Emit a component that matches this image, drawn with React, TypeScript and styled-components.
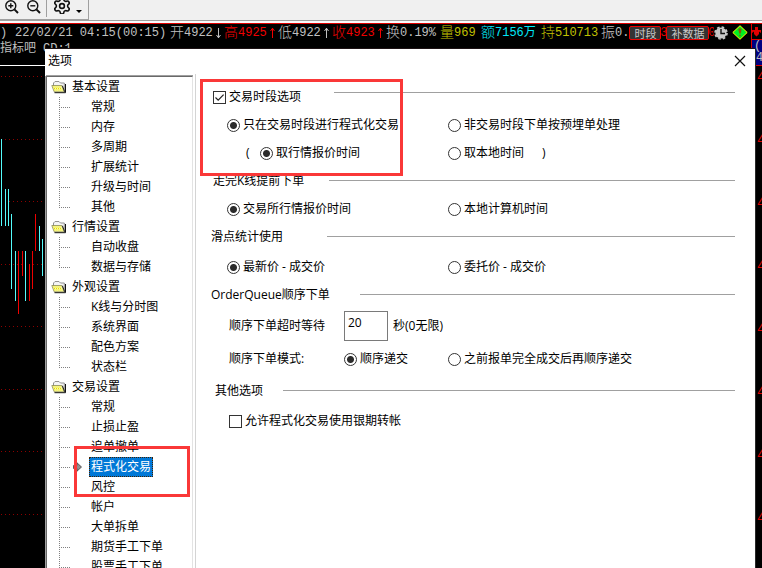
import React from "react";
import styled, { createGlobalStyle } from "styled-components";
import { Settings } from "lucide-react";

const GlobalStyle = createGlobalStyle`
  * { box-sizing: border-box; }
  html, body, #root { height: 100%; }
  body {
    margin: 0;
    overflow: hidden;
    background: #000;
    font: 12px/20px "Open Sans", "Noto Sans CJK SC", sans-serif;
    color: #000;
  }
  ul { list-style: none; margin: 0; padding: 0; }
`;

const Page = styled.div`
  display: flex;
  flex-direction: column;
  height: 100vh;
  overflow: hidden;
`;

/* ---------- toolbar ---------- */

const ToolbarStrip = styled.header`
  flex: none;
  height: 24px;
  background: #fafafa;
  border-bottom: 1px solid #e00000;
`;

const ToolbarFace = styled.div`
  height: 21px;
  background: #f0f0f0;
  border-bottom: 1px solid #a0a0a0;
`;

const ToolGroup = styled.div`
  display: flex;
  width: 89px;
  height: 20px;
  padding-left: 5px;
  border-right: 1px solid #a0a0a0;
  border-bottom: 1px solid #a0a0a0;
`;

const ToolButton = styled.button<{ $wide?: boolean }>`
  display: flex;
  align-items: flex-start;
  gap: 6px;
  width: ${(p) => (p.$wide ? "34px" : "22px")};
  height: 16px;
  padding: 0;
  border: 0;
  background: none;
  color: #111;
`;

const ToolDivider = styled.span`
  width: 1px;
  height: 17px;
  margin: 0 7px 0 -2px;
  background: #a0a0a0;
`;

/* ---------- chart workspace ---------- */

const Workspace = styled.main`
  position: relative;
  display: flex;
  flex: 1;
  min-height: 0;
  overflow: hidden;
  background: #000;
`;

const ChartPane = styled.section`
  display: flex;
  flex-direction: column;
  flex: 1;
  min-width: 0;
  overflow: hidden;
`;

const QuoteBar = styled.div`
  display: grid;
  grid-template-columns: 15px 155px repeat(5, 54px) 41px 60px 60px 1fr;
  align-items: center;
  height: 17px;
  font: 12px/16px "Liberation Mono", "Noto Sans CJK SC", monospace;
  white-space: nowrap;
  overflow: hidden;
`;

const QuoteCell = styled.span<{ $color?: string }>`
  display: flex;
  align-items: center;
  min-width: 0;
  height: 17px;
  color: ${(p) => p.$color ?? "#c0c0c0"};
`;

const QuoteName = styled.span`
  font-size: 14px;
  font-weight: 300;
`;

const ArrowSlot = styled.span`
  display: flex;
  flex: 1;
  justify-content: center;
`;

const Clipped = styled.span`
  display: flex;
  justify-content: center;
  width: 5px;
  overflow: hidden;
  color: #e00000;
`;

const QuoteButton = styled.button`
  flex: none;
  height: 14px;
  padding: 0 4px;
  border: 1px solid #f00000;
  border-radius: 2px;
  background: #333;
  color: #c8c8c8;
  font: 11px/12px "Noto Sans CJK SC", sans-serif;
`;

const Badges = styled.span`
  display: flex;
  gap: 4px;
  align-items: center;
`;

const IndicatorLine = styled.div`
  display: flex;
  gap: 7px;
  height: 25px;
  border-bottom: 1px solid #fff;
  color: #c0c0c0;
  font: 12px/16px "Liberation Mono", "Noto Sans CJK SC", monospace;
`;

const ChartCanvas = styled.div`
  flex: 1;
  min-height: 0;
  overflow: hidden;
`;

const PriceAxis = styled.aside`
  flex: none;
  width: 11px;
  overflow: hidden;
  border-left: 1px solid #e00000;
  font: 14px/12px "Liberation Mono", monospace;
`;

const AxisTop = styled.div`
  display: flex;
  align-items: center;
  height: 16px;
  border-bottom: 1px solid #e00000;
`;

const AxisQuote = styled.div`
  height: 26px;
  padding-left: 2px;
  border-bottom: 1px solid #e00000;
  background: #000080;
  color: #c0c0c0;
  font-size: 12px;
`;

const AxisSecond = styled.div`
  padding-left: 2px;
`;

const AxisMarks = styled.ul`
  display: flex;
  flex-direction: column;
  gap: 51px;
  padding: 5px 0 0 5px;
  color: #e00000;
`;

/* ---------- settings window ---------- */

const Dialog = styled.div`
  position: absolute;
  inset: 25px 7px 0 45px;
  display: flex;
  flex-direction: column;
  overflow: hidden;
  background: #fff;
  box-shadow: 1px 0 0 #2a2a2a, 0 -1px 0 #1c1214;
`;

const TitleBar = styled.div`
  display: flex;
  flex: none;
  align-items: center;
  justify-content: space-between;
  height: 25px;
  padding: 0 9px 2px 3px;
`;

const Title = styled.h1`
  margin: 0;
  font-size: 12px;
  font-weight: 400;
`;

const CloseButton = styled.button`
  display: flex;
  padding: 0;
  border: 0;
  background: none;
`;

const DialogBody = styled.div`
  display: flex;
  flex: 1;
  min-height: 0;
`;

const TreePane = styled.nav`
  flex: none;
  width: 147px;
  margin: 2px 2px 0 1px;
  overflow: hidden;
  border: solid #696969;
  border-width: 1px 1px 0 1px;
  border-right-color: #e3e3e3;
  box-shadow: -1px 0 0 #a0a0a0, 0 -1px 0 #a0a0a0;
`;

const GroupRow = styled.div`
  display: flex;
  align-items: center;
  gap: 5px;
  height: 20px;
  padding-left: 4px;
`;

const ItemRow = styled.li`
  display: flex;
  align-items: center;
  height: 20px;
  padding-left: 12px;
`;

const Branch = styled.span<{ $last: boolean }>`
  width: 12px;
  height: 20px;
  background:
    repeating-linear-gradient(to bottom, #808080 0 1px, transparent 1px 2px) 0 0 / 1px ${(p) => (p.$last ? "10px" : "20px")} no-repeat,
    repeating-linear-gradient(to right, #808080 0 1px, transparent 1px 2px) 0 10px / 12px 1px no-repeat;
`;

const Marker = styled.span`
  width: 18px;
  height: 20px;
  padding: 5px 0 0 2px;
  line-height: 0;
`;

const ItemLink = styled.a<{ $active: boolean }>`
  padding: 0 2px;
  color: ${(p) => (p.$active ? "#fff" : "#000")};
  background: ${(p) => (p.$active ? "#0078d7" : "transparent")};
  outline: ${(p) => (p.$active ? "1px dotted #402000" : "none")};
  outline-offset: -1px;
  text-decoration: none;
  white-space: nowrap;
`;

const FormPane = styled.form`
  display: flex;
  flex: 1;
  flex-direction: column;
  min-width: 0;
  padding: 13px 20px 0 15px;
  border-left: 1px solid #d4d4d4;
`;

const SectionHead = styled.div<{ $label: number; $indent?: number; $top?: number }>`
  display: grid;
  grid-template-columns: ${(p) => p.$label}px 1fr;
  align-items: center;
  height: 20px;
  margin-top: ${(p) => p.$top ?? 8}px;
  padding-left: ${(p) => p.$indent ?? 0}px;
  white-space: nowrap;
`;

const SectionTitle = styled.h2`
  margin: 0;
  font-size: 12px;
  font-weight: 400;
`;

const Rule = styled.hr<{ $raised?: boolean }>`
  width: 100%;
  height: 1px;
  margin: 0 0 ${(p) => (p.$raised ? "10px" : "2px")};
  border: 0;
  background: #a0a0a0;
`;

const OptionRow = styled.div<{ $top?: number }>`
  display: grid;
  grid-template-columns: 221px 1fr;
  align-items: center;
  margin-top: ${(p) => p.$top ?? 8}px;
  padding-left: 16px;
  white-space: nowrap;
`;

const OptionCell = styled.div`
  display: flex;
  align-items: center;
  min-height: 20px;
`;

const OpenParen = styled.span`
  width: 33px;
  padding-left: 19px;
`;

const CloseParen = styled.span`
  padding-left: 18px;
`;

const FieldName = styled.label`
  width: 117px;
  padding-left: 2px;
`;

const FieldText = styled.span`
  width: 117px;
  padding-left: 2px;
`;

const Choice = styled.label<{ $inset?: boolean }>`
  display: flex;
  align-items: center;
  gap: 3px;
  padding-left: ${(p) => (p.$inset ? "2px" : "0")};
`;

const Radio = styled.input.attrs({ type: "radio" })`
  appearance: none;
  flex: none;
  width: 13px;
  height: 13px;
  margin: 0;
  border: 1px solid #333;
  border-radius: 50%;
  background: #fff;
  &:checked { background: radial-gradient(circle, #2b2b2b 0 3px, #fff 4px); }
`;

const Check = styled.input.attrs({ type: "checkbox" })`
  appearance: none;
  flex: none;
  width: 13px;
  height: 13px;
  margin: 0;
  border: 1px solid #333;
  background: #fff;
  &:checked {
    background: url("data:image/svg+xml,%3Csvg xmlns='http://www.w3.org/2000/svg' viewBox='0 0 11 11'%3E%3Cpath d='M1.5 5.5 4.2 8.2 9.6 2.6' fill='none' stroke='%23222' stroke-width='1.2'/%3E%3C/svg%3E") center / 11px 11px no-repeat;
  }
`;

const SecondsInput = styled.input`
  width: 44px;
  height: 30px;
  margin-right: 5px;
  padding: 0 3px 8px;
  border: 1px solid #7a7a7a;
  background: #fff;
  font: inherit;
`;

/* ---------- red call-out frames laid over the window ---------- */

const Callout = styled.div<{ $area: "options" | "tree" }>`
  position: absolute;
  inset: ${(p) => (p.$area === "options" ? "55px auto auto 200px" : "422px auto auto 74px")};
  width: ${(p) => (p.$area === "options" ? "203px" : "116px")};
  height: ${(p) => (p.$area === "options" ? "97px" : "51px")};
  border: 3px solid #fa3838;
  pointer-events: none;
`;

/* ---------- drawings ---------- */

const Magnifier = ({ plus }: { plus?: boolean }) => (
  <svg width="15" height="14" viewBox="0 0 15 14" fill="none" stroke="#111" strokeWidth="1.4">
    <circle cx="5.8" cy="5.8" r="5" />
    <path d="M9.4 9.4 13 13" strokeWidth="2" />
    <path d={plus ? "M3.3 5.8h5M5.8 3.3v5" : "M3.3 5.8h5"} />
  </svg>
);

const Arrow = ({ up }: { up?: boolean }) => (
  <svg width="5" height="12" viewBox="0 0 5 12" fill="none" stroke="currentColor">
    <path d={up ? "M2.5 1v10M.5 4 2.5 1.2 4.5 4" : "M2.5 1v10M.5 8 2.5 10.8 4.5 8"} />
  </svg>
);

const Clock = () => (
  <svg width="14" height="14" viewBox="0 0 14 14">
    <circle cx="7" cy="7" r="5.6" fill="#c8c8c8" />
    <circle cx="7" cy="7" r="6" fill="none" stroke="#c8c8c8" strokeWidth="1.6" strokeDasharray="2.6 2.1" />
    <path d="M7 3v4.5h4" fill="none" stroke="#111" strokeWidth="1.4" />
  </svg>
);

const AlertDiamond = () => (
  <svg width="16" height="15" viewBox="0 0 16 15">
    <path d="M8 .7 15.2 7.5 8 14.3.8 7.5Z" fill="#00f020" stroke="#ffff00" />
    <path d="M6.3 4.2 8 3l1.7 1.2L8.8 8.5H7.2Z" fill="#806000" />
    <path d="M7.2 9.7h1.6v1.6H7.2z" fill="#806000" />
  </svg>
);

const AxisGlyph = () => (
  <svg width="10" height="12" viewBox="0 0 10 12" fill="#e00000">
    <path d="M3 1h3v3h3v3l-2-1.5V8L4.5 10.5 2 8V5.5L0 7V4h3Z" />
  </svg>
);

const Folder = () => (
  <svg width="16" height="14" viewBox="0 0 16 14">
    <path d="M2.5 6V3L4 1.5h4L9.5 3h3.8v9" fill="#f4f4f4" stroke="#909090" />
    <path d="M.8 5.5h10l2.4 6.3H3.2Z" fill="#fafaa0" stroke="#8a8a50" strokeWidth=".8" />
    <path d="M2.5 7h8M3 8.5h8M3.4 10h8.4" stroke="#e8e000" strokeDasharray="1 1" />
    <path d="M14.5 4v8.7H3.5" fill="none" stroke="#111" />
    <path d="M11.4 5.8l2.3 6" fill="none" stroke="#222" />
  </svg>
);

const SelectedMark = () => (
  <svg width="9" height="10" viewBox="0 0 9 10">
    <path d="M.5 3.5H4V.8L8.5 5 4 9.2V6.5H.5Z" fill="#909090" stroke="#404040" strokeWidth=".8" />
  </svg>
);

const CYAN = "#54fcfc";
const RED = "#f00000";

const bars: [number, number, number, string][] = [
  [1, 139, 226, CYAN],
  [5, 189, 226, CYAN],
  [8, 189, 226, CYAN],
  [11, 214, 289, CYAN],
  [15, 251, 301, CYAN],
  [18, 251, 314, RED],
  [22, 251, 276, RED],
  [25, 251, 301, CYAN],
  [29, 264, 301, RED],
  [32, 251, 289, RED],
  [35, 214, 251, RED],
  [39, 226, 251, CYAN],
  [42, 239, 276, CYAN],
];

const gridLines = [76, 139, 201, 264, 326, 389, 451, 514];

const PriceChart = () => (
  <svg width="45" height="502" viewBox="0 66 45 502" shapeRendering="crispEdges">
    {gridLines.map((y) => (
      <path key={y} d={`M1 ${y}.5H45`} stroke="#8c0000" strokeDasharray="1 3" />
    ))}
    {bars.map(([x, top, bottom, color]) => (
      <rect key={x} x={x} y={top} width="1" height={bottom - top} fill={color} />
    ))}
  </svg>
);

/* ---------- data ---------- */

const tree = [
  { name: "基本设置", items: ["常规", "内存", "多周期", "扩展统计", "升级与时间", "其他"] },
  { name: "行情设置", items: ["自动收盘", "数据与存储"] },
  { name: "外观设置", items: ["K线与分时图", "系统界面", "配色方案", "状态栏"] },
  {
    name: "交易设置",
    items: ["常规", "止损止盈", "追单撤单", "程式化交易", "风控", "帐户", "大单拆单", "期货手工下单", "股票手工下单"],
  },
];

const quotes: { name: string; value: string; color?: string; arrow?: "up" | "down" }[] = [
  { name: "开", value: "4922", arrow: "down" },
  { name: "高", value: "4925", color: "#f00000", arrow: "up" },
  { name: "低", value: "4922", arrow: "up" },
  { name: "收", value: "4923", color: "#f00000", arrow: "up" },
  { name: "换", value: "0.19%" },
  { name: "量", value: "969", color: "#c0c000" },
  { name: "额", value: "7156万", color: "#00e8f8" },
  { name: "持", value: "510713", color: "#c0c000" },
];

const SELECTED = "程式化交易";

export default function App() {
  return (
    <Page>
      <GlobalStyle />
      <ToolbarStrip>
        <ToolbarFace>
          <ToolGroup>
            <ToolButton aria-label="放大"><Magnifier plus /></ToolButton>
            <ToolButton aria-label="缩小"><Magnifier /></ToolButton>
            <ToolDivider />
            <ToolButton aria-label="设置" $wide>
              <Settings width={16} height={14} viewBox="2 4.5 20 17.5" strokeWidth={2} />
              <svg width="6" height="14" viewBox="0 0 6 14"><path d="M0 10h6L3 13Z" fill="#000" /></svg>
            </ToolButton>
          </ToolGroup>
        </ToolbarFace>
      </ToolbarStrip>

      <Workspace>
        <ChartPane>
          <QuoteBar>
            <QuoteCell>)</QuoteCell>
            <QuoteCell>22/02/21 04:15(00:15)</QuoteCell>
            {quotes.map((q) => (
              <QuoteCell key={q.name} $color={q.color}>
                <QuoteName>{q.name}</QuoteName>
                {q.value}
                {q.arrow && <ArrowSlot><Arrow up={q.arrow === "up"} /></ArrowSlot>}
              </QuoteCell>
            ))}
            <QuoteCell>
              <QuoteName>振</QuoteName>0.
              <QuoteButton>时段</QuoteButton>
              <Clipped>3</Clipped>
              <QuoteButton>补数据</QuoteButton>
              <Clipped>0</Clipped>
              <Badges><Clock /><AlertDiamond /></Badges>
            </QuoteCell>
          </QuoteBar>
          <IndicatorLine>
            <span>指标吧</span>
            <span>CD:1</span>
          </IndicatorLine>
          <ChartCanvas><PriceChart /></ChartCanvas>
        </ChartPane>
        <PriceAxis>
          <AxisTop><AxisGlyph /></AxisTop>
          <AxisQuote>
            <div>(7</div>
            <AxisSecond>4</AxisSecond>
          </AxisQuote>
          <AxisMarks>
            {gridLines.map((y) => <li key={y}>4</li>)}
          </AxisMarks>
        </PriceAxis>

        <Dialog role="dialog" aria-labelledby="dialog-title">
          <TitleBar>
            <Title id="dialog-title">选项</Title>
            <CloseButton aria-label="关闭">
              <svg width="12" height="12" viewBox="0 0 12 12" stroke="#111" strokeWidth="1.2">
                <path d="M1 1 11 11M11 1 1 11" />
              </svg>
            </CloseButton>
          </TitleBar>
          <DialogBody>
            <TreePane>
              {tree.map((group) => (
                <div key={group.name}>
                  <GroupRow><Folder />{group.name}</GroupRow>
                  <ul>
                    {group.items.map((item, i) => (
                      <ItemRow key={item}>
                        <Branch $last={group.name !== "交易设置" && i === group.items.length - 1} />
                        <Marker>{item === SELECTED && <SelectedMark />}</Marker>
                        <ItemLink href="#" $active={item === SELECTED}>{item}</ItemLink>
                      </ItemRow>
                    ))}
                  </ul>
                </div>
              ))}
            </TreePane>

            <FormPane>
              <SectionHead $label={121} $indent={2} $top={0}>
                <Choice><Check defaultChecked />交易时段选项</Choice>
                <Rule $raised />
              </SectionHead>
              <OptionRow>
                <OptionCell><Choice><Radio name="session" defaultChecked />只在交易时段进行程式化交易</Choice></OptionCell>
                <OptionCell><Choice><Radio name="session" />非交易时段下单按预埋单处理</Choice></OptionCell>
              </OptionRow>
              <OptionRow>
                <OptionCell>
                  <OpenParen>(</OpenParen>
                  <Choice><Radio name="clock" defaultChecked />取行情报价时间</Choice>
                </OptionCell>
                <OptionCell>
                  <Choice><Radio name="clock" />取本地时间</Choice>
                  <CloseParen>)</CloseParen>
                </OptionCell>
              </OptionRow>

              <SectionHead $label={116} $indent={2}>
                <SectionTitle>走完K线提前下单</SectionTitle>
                <Rule />
              </SectionHead>
              <OptionRow>
                <OptionCell><Choice><Radio name="kline" defaultChecked />交易所行情报价时间</Choice></OptionCell>
                <OptionCell><Choice><Radio name="kline" />本地计算机时间</Choice></OptionCell>
              </OptionRow>

              <SectionHead $label={116}>
                <SectionTitle>滑点统计使用</SectionTitle>
                <Rule />
              </SectionHead>
              <OptionRow $top={10}>
                <OptionCell><Choice><Radio name="slip" defaultChecked />最新价 - 成交价</Choice></OptionCell>
                <OptionCell><Choice><Radio name="slip" />委托价 - 成交价</Choice></OptionCell>
              </OptionRow>

              <SectionHead $label={149}>
                <SectionTitle>OrderQueue顺序下单</SectionTitle>
                <Rule />
              </SectionHead>
              <OptionRow $top={6}>
                <OptionCell>
                  <FieldName htmlFor="timeout">顺序下单超时等待</FieldName>
                  <SecondsInput id="timeout" defaultValue="20" />
                  秒(0无限)
                </OptionCell>
              </OptionRow>
              <OptionRow>
                <OptionCell>
                  <FieldText>顺序下单模式:</FieldText>
                  <Choice><Radio name="mode" defaultChecked />顺序递交</Choice>
                </OptionCell>
                <OptionCell><Choice><Radio name="mode" />之前报单完全成交后再顺序递交</Choice></OptionCell>
              </OptionRow>

              <SectionHead $label={68} $indent={4} $top={12}>
                <SectionTitle>其他选项</SectionTitle>
                <Rule />
              </SectionHead>
              <OptionRow $top={10}>
                <OptionCell><Choice $inset><Check />允许程式化交易使用银期转帐</Choice></OptionCell>
              </OptionRow>
            </FormPane>
          </DialogBody>
        </Dialog>

        <Callout $area="options" />
        <Callout $area="tree" />
      </Workspace>
    </Page>
  );
}
